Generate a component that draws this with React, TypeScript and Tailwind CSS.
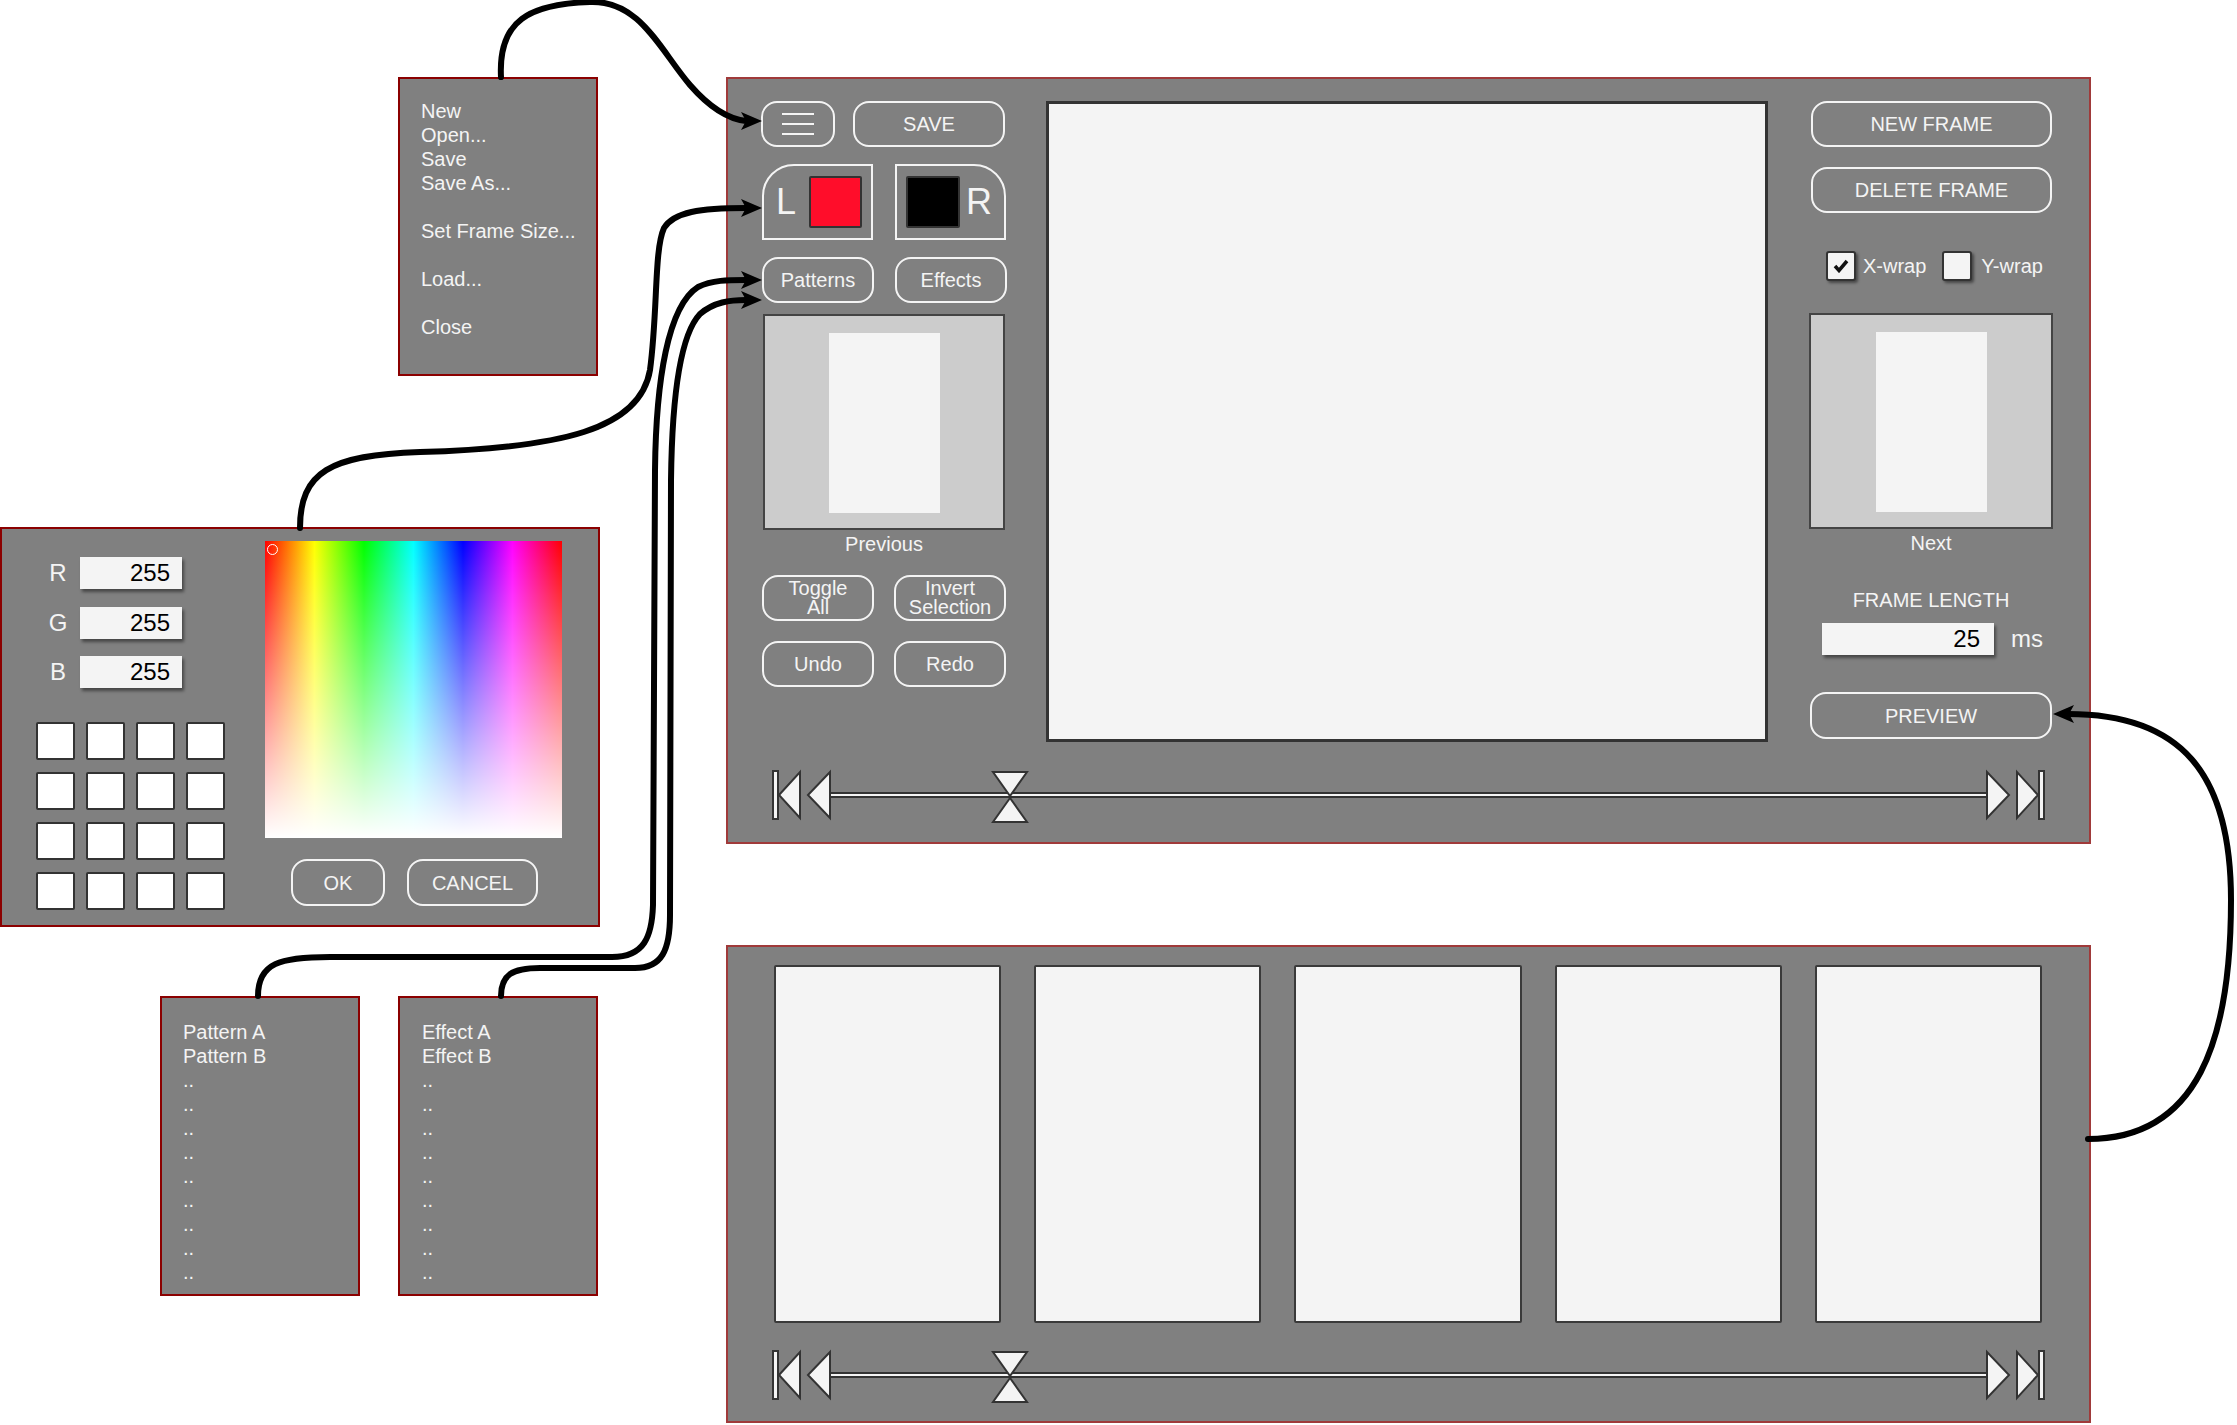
import React from 'react';

const font = "font-['Liberation_Sans',Arial,sans-serif]";
const btn =
  'flex items-center justify-center rounded-[16px] border-2 border-[#f4f4f4] text-[20px] text-[#f4f4f4] leading-none';

function Timeline() {
  return (
    <div className="flex h-[50px] w-[1273px] items-center">
      <svg width="59" height="50" viewBox="0 0 59 50" className="shrink-0 overflow-visible">
        <rect x="1" y="1" width="5" height="48" fill="#f4f4f4" stroke="#333" strokeWidth="2" />
        <polygon points="7,25 28,2 28,48" fill="#f4f4f4" stroke="#333" strokeWidth="2" />
        <polygon points="36,25 58,2 58,48" fill="#f4f4f4" stroke="#333" strokeWidth="2" />
      </svg>
      <div className="relative h-[6px] flex-1 border-y-2 border-[#333] bg-[#f4f4f4]">
        <svg
          width="36"
          height="52"
          viewBox="0 0 36 52"
          className="absolute left-[161px] top-[-23px] overflow-visible"
        >
          <polygon points="1,1 35,1 18,25" fill="#f4f4f4" stroke="#333" strokeWidth="2" />
          <polygon points="18,27 1,51 35,51" fill="#f4f4f4" stroke="#333" strokeWidth="2" />
        </svg>
      </div>
      <svg width="59" height="50" viewBox="0 0 59 50" className="shrink-0 overflow-visible">
        <polygon points="1,2 1,48 23,25" fill="#f4f4f4" stroke="#333" strokeWidth="2" />
        <polygon points="31,2 31,48 52,25" fill="#f4f4f4" stroke="#333" strokeWidth="2" />
        <rect x="53" y="1" width="5" height="48" fill="#f4f4f4" stroke="#333" strokeWidth="2" />
      </svg>
    </div>
  );
}

function Preview({ wide }: { wide?: boolean }) {
  return (
    <div
      className={`flex h-[216px] justify-center border-2 border-[#444] bg-[#cccccc] pt-[17px] ${
        wide ? 'w-[244px]' : 'w-[242px]'
      }`}
    >
      <div className="h-[180px] w-[111px] bg-[#f4f4f4]" />
    </div>
  );
}

function Checkbox({ checked }: { checked?: boolean }) {
  return (
    <div className="flex h-[30px] w-[30px] items-center justify-center rounded-[3px] border-2 border-[#333] bg-[#f4f4f4] shadow-[2px_2px_3px_rgba(0,0,0,0.45)]">
      {checked && (
        <svg width="16" height="14" viewBox="0 0 16 14">
          <path d="M2 7 L6 11.5 L14 2" stroke="#111" strokeWidth="3.5" fill="none" />
        </svg>
      )}
    </div>
  );
}

function MainPanel() {
  return (
    <div className="absolute left-[726px] top-[77px] h-[767px] w-[1365px] border-2 border-[#a03a3a] bg-[#808080]">
      <div className="ml-[33px] mt-[22px] flex">
        {/* left tools */}
        <div className="flex w-[246px] flex-col">
          <div className="flex gap-[18px]">
            <div className={`${btn} h-[46px] w-[74px] flex-col gap-[8px]`}>
              <span className="h-[2px] w-[32px] bg-[#f4f4f4]" />
              <span className="h-[2px] w-[32px] bg-[#f4f4f4]" />
              <span className="h-[2px] w-[32px] bg-[#f4f4f4]" />
            </div>
            <div className={`${btn} h-[46px] w-[152px]`}>SAVE</div>
          </div>
          <div className="ml-[1px] mt-[17px] flex gap-[22px]">
            <div className="flex h-[76px] w-[111px] items-center rounded-tl-[32px] border-2 border-[#f4f4f4] pl-[12px]">
              <span className="w-[33px] text-[36px] leading-none text-[#f4f4f4]">L</span>
              <div className="h-[52px] w-[53px] rounded-[2px] border-2 border-[#333] bg-[#ff0d2a]" />
            </div>
            <div className="flex h-[76px] w-[111px] items-center rounded-tr-[32px] border-2 border-[#f4f4f4] pl-[9px]">
              <div className="h-[52px] w-[54px] rounded-[2px] border-2 border-[#333] bg-black" />
              <span className="ml-[6px] text-[36px] leading-none text-[#f4f4f4]">R</span>
            </div>
          </div>
          <div className="ml-[1px] mt-[17px] flex gap-[21px]">
            <div className={`${btn} h-[46px] w-[112px]`}>Patterns</div>
            <div className={`${btn} h-[46px] w-[112px]`}>Effects</div>
          </div>
          <div className="ml-[2px] mt-[11px]">
            <Preview />
            <div className="mt-[2px] w-[242px] text-center text-[20px] leading-[24px] text-[#f4f4f4]">
              Previous
            </div>
          </div>
          <div className="ml-[1px] mt-[19px] flex gap-[20px]">
            <div className={`${btn} h-[46px] w-[112px] flex-col text-center !leading-[19px]`}>
              <span>Toggle</span>
              <span>All</span>
            </div>
            <div className={`${btn} h-[46px] w-[112px] flex-col text-center !leading-[19px]`}>
              <span>Invert</span>
              <span>Selection</span>
            </div>
          </div>
          <div className="ml-[1px] mt-[20px] flex gap-[20px]">
            <div className={`${btn} h-[46px] w-[112px]`}>Undo</div>
            <div className={`${btn} h-[46px] w-[112px]`}>Redo</div>
          </div>
        </div>

        {/* canvas */}
        <div className="ml-[39px] h-[641px] w-[722px] border-[3px] border-[#333] bg-[#f4f4f4]" />

        {/* right tools */}
        <div className="ml-[41px] flex w-[244px] flex-col">
          <div className={`${btn} ml-[2px] h-[46px] w-[241px]`}>NEW FRAME</div>
          <div className={`${btn} ml-[2px] mt-[20px] h-[46px] w-[241px]`}>DELETE FRAME</div>
          <div className="ml-[17px] mt-[38px] flex h-[30px] items-center text-[20px] text-[#f4f4f4]">
            <Checkbox checked />
            <span className="ml-[7px]">X-wrap</span>
            <div className="ml-[16px]">
              <Checkbox />
            </div>
            <span className="ml-[9px]">Y-wrap</span>
          </div>
          <div className="mt-[32px]">
            <Preview wide />
            <div className="mt-[2px] text-center text-[20px] leading-[24px] text-[#f4f4f4]">Next</div>
          </div>
          <div className="mt-[33px] text-center text-[20px] leading-[24px] text-[#f4f4f4]">FRAME LENGTH</div>
          <div className="ml-[13px] mt-[9px] flex items-center">
            <div className="flex h-[32px] w-[172px] items-center justify-end bg-[#f4f4f4] pr-[14px] text-[24px] text-black shadow-[2px_3px_3px_rgba(0,0,0,0.45)]">
              25
            </div>
            <span className="ml-[17px] text-[24px] text-[#f4f4f4]">ms</span>
          </div>
          <div className={`${btn} ml-[1px] mt-[35px] h-[47px] w-[242px]`}>PREVIEW</div>
        </div>
      </div>
      <div className="ml-[44px] mt-[28px]">
        <Timeline />
      </div>
    </div>
  );
}

function FrameStrip() {
  return (
    <div className="absolute left-[726px] top-[945px] h-[478px] w-[1365px] border-2 border-[#a03a3a] bg-[#808080]">
      <div className="ml-[46px] mt-[18px] grid w-[1268px] grid-cols-5 gap-[33px]">
        {[0, 1, 2, 3, 4].map((i) => (
          <div key={i} className="h-[358px] rounded-[2px] border-2 border-[#3a3a3a] bg-[#f4f4f4]" />
        ))}
      </div>
      <div className="ml-[44px] mt-[27px]">
        <Timeline />
      </div>
    </div>
  );
}

function ColorPicker() {
  return (
    <div className="absolute left-0 top-[527px] flex h-[400px] w-[600px] border-2 border-[#8b0000] bg-[#808080]">
      <div className="flex w-[263px] flex-col pl-[34px] pt-[28px]">
        {['R', 'G', 'B'].map((c, i) => (
          <div key={c} className={`flex items-center ${i === 0 ? '' : i === 1 ? 'mt-[18px]' : 'mt-[17px]'}`}>
            <span className="w-[44px] text-center text-[24px] leading-none text-[#f4f4f4]">{c}</span>
            <div className="flex h-[32px] w-[102px] items-center justify-end bg-[#f4f4f4] pr-[12px] text-[24px] text-black shadow-[2px_3px_3px_rgba(0,0,0,0.45)]">
              255
            </div>
          </div>
        ))}
        <div className="mt-[34px] grid w-[189px] grid-cols-4 gap-x-[11px] gap-y-[12px]">
          {Array.from({ length: 16 }).map((_, i) => (
            <div key={i} className="h-[38px] w-[39px] rounded-[2px] border-2 border-[#333] bg-white" />
          ))}
        </div>
      </div>
      <div className="flex flex-col pt-[12px]">
        <div className="relative h-[297px] w-[297px] bg-[linear-gradient(to_bottom,rgba(255,255,255,0),#ffffff),linear-gradient(to_right,#ff0000,#ffff00,#00ff00,#00ffff,#0000ff,#ff00ff,#ff0000)]">
          <div className="absolute left-[2px] top-[3px] h-[11px] w-[11px] rounded-full border-[1.5px] border-white" />
        </div>
        <div className="ml-[26px] mt-[21px] flex gap-[22px]">
          <div className={`${btn} h-[47px] w-[94px]`}>OK</div>
          <div className={`${btn} h-[47px] w-[131px]`}>CANCEL</div>
        </div>
      </div>
    </div>
  );
}

function ListPanel({ items, className }: { items: string[]; className: string }) {
  return (
    <div className={`absolute flex flex-col border-2 border-[#8b0000] bg-[#808080] text-[20px] leading-[24px] text-[#f4f4f4] ${className}`}>
      {items.map((t, i) => (
        <div key={i} className="h-[24px] whitespace-pre">
          {t}
        </div>
      ))}
    </div>
  );
}

function Connectors() {
  const arrowR = (x: number, y: number) => `${x},${y} ${x - 21},${y - 9} ${x - 16},${y} ${x - 21},${y + 9}`;
  const arrowL = (x: number, y: number) => `${x},${y} ${x + 21},${y - 9} ${x + 16},${y} ${x + 21},${y + 9}`;
  return (
    <svg
      className="pointer-events-none absolute left-0 top-0 z-10"
      width="2237"
      height="1425"
      viewBox="0 0 2237 1425"
    >
      <g fill="none" stroke="#000" strokeWidth="6" strokeLinecap="round">
        <path d="M501 77 C498 20, 530 4, 590 2 C640 0, 660 50, 690 85 C710 108, 728 119, 746 121" />
        <path d="M300 528 C300 472, 330 455, 420 452 C560 448, 640 430, 650 370 C658 310, 654 250, 664 228 C674 212, 700 208, 746 208" />
        <path d="M258 996 C258 963, 280 957, 330 957 L612 957 C644 957, 652 937, 653 905 L655 470 C656 380, 668 306, 698 287 C712 280, 728 280, 746 280" />
        <path d="M501 996 C501 975, 512 968, 540 968 L635 968 C662 968, 670 950, 670 915 L671 480 C672 400, 680 335, 700 314 C714 302, 730 300, 746 300" />
        <path d="M2088 1139 C2198 1139, 2231 1040, 2231 900 C2231 772, 2180 714, 2068 714" />
      </g>
      <g fill="#000">
        <polygon points={arrowR(762, 121)} />
        <polygon points={arrowR(762, 208)} />
        <polygon points={arrowR(762, 280)} />
        <polygon points={arrowR(762, 300)} />
        <polygon points={arrowL(2053, 714)} />
      </g>
    </svg>
  );
}

export default function App() {
  const dots = Array.from({ length: 9 }, () => '..');
  return (
    <div className={`relative h-[1425px] w-[2237px] overflow-hidden bg-white ${font}`}>
      <ListPanel
        className="left-[398px] top-[77px] h-[299px] w-[200px] pl-[21px] pt-[20px]"
        items={['New', 'Open...', 'Save', 'Save As...', ' ', 'Set Frame Size...', ' ', 'Load...', ' ', 'Close']}
      />
      <ColorPicker />
      <ListPanel
        className="left-[160px] top-[996px] h-[300px] w-[200px] pl-[21px] pt-[22px]"
        items={['Pattern A', 'Pattern B', ...dots]}
      />
      <ListPanel
        className="left-[398px] top-[996px] h-[300px] w-[200px] pl-[22px] pt-[22px]"
        items={['Effect A', 'Effect B', ...dots]}
      />
      <MainPanel />
      <FrameStrip />
      <Connectors />
    </div>
  );
}
